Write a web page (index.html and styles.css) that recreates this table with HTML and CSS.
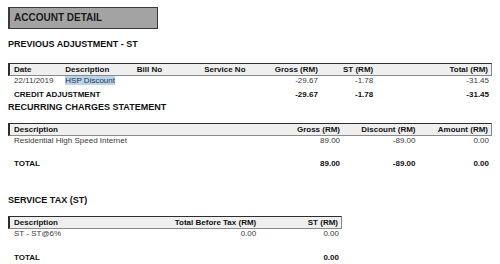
FILE: index.html
```html
<!DOCTYPE html>
<html>
<head>
<meta charset="utf-8">
<link rel="stylesheet" href="styles.css">
</head>
<body>
<div class="title-box">ACCOUNT DETAIL</div>

<h2 class="sec sec-first">PREVIOUS ADJUSTMENT - ST</h2>
<table class="grid t1">
  <colgroup>
    <col style="width:53px"><col style="width:71px"><col style="width:67px"><col style="width:50px">
    <col style="width:70px"><col style="width:55px"><col style="width:115px">
  </colgroup>
  <thead>
    <tr><th>Date</th><th>Description</th><th>Bill No</th><th>Service No</th><th class="r">Gross (RM)</th><th class="r">ST (RM)</th><th class="r">Total (RM)</th></tr>
  </thead>
  <tbody>
    <tr class="row"><td>22/11/2019</td><td><span class="hl">HSP Discount</span></td><td></td><td></td><td class="r">-29.67</td><td class="r">-1.78</td><td class="r">-31.45</td></tr>
    <tr class="sum sum-credit"><td colspan="4">CREDIT ADJUSTMENT</td><td class="r">-29.67</td><td class="r">-1.78</td><td class="r">-31.45</td></tr>
  </tbody>
</table>

<h2 class="sec sec-tight">RECURRING CHARGES STATEMENT</h2>
<table class="grid t2">
  <colgroup>
    <col style="width:258px"><col style="width:75px"><col style="width:75px"><col style="width:73px">
  </colgroup>
  <thead>
    <tr><th>Description</th><th class="r">Gross (RM)</th><th class="r">Discount (RM)</th><th class="r">Amount (RM)</th></tr>
  </thead>
  <tbody>
    <tr class="row"><td>Residential High Speed Internet</td><td class="r">89.00</td><td class="r">-89.00</td><td class="r">0.00</td></tr>
    <tr class="sum sum-total"><td>TOTAL</td><td class="r">89.00</td><td class="r">-89.00</td><td class="r">0.00</td></tr>
  </tbody>
</table>

<h2 class="sec sec-tax">SERVICE TAX (ST)</h2>
<table class="grid t3">
  <colgroup>
    <col style="width:150px"><col style="width:99px"><col style="width:82px">
  </colgroup>
  <thead>
    <tr><th>Description</th><th class="r">Total Before Tax (RM)</th><th class="r">ST (RM)</th></tr>
  </thead>
  <tbody>
    <tr class="row"><td>ST - ST@6%</td><td class="r">0.00</td><td class="r">0.00</td></tr>
    <tr class="sum sum-total2"><td>TOTAL</td><td></td><td class="r">0.00</td></tr>
  </tbody>
</table>
</body>
</html>
```

FILE: styles.css
```css
html, body {
  background: #ffffff;
}
body {
  margin: 8px;
  margin-top: 7px;
  font-family: "Liberation Sans", Arial, sans-serif;
  color: #1e1e1e;
}
.title-box {
  width: 143px;
  height: 20px;
  background: #a3a3a3;
  border: 1px solid #3a3a3a;
  border-left-width: 2px;
  padding-left: 4px;
  font-size: 10px;
  font-weight: bold;
  line-height: 20px;
  color: #1a1a1a;
}
.sec {
  margin: 0;
  font-size: 9px;
  font-weight: bold;
  line-height: 12px;
  color: #111;
}
.sec-first { margin-top: 9px; }
.sec-tight { margin-top: 1px; }
.sec-tax { margin-top: 25px; }

.grid {
  border-collapse: separate;
  border-spacing: 0;
  table-layout: fixed;
  font-size: 8px;
}
.t1 { width: 484px; margin-top: 13px; }
.t2 { width: 484px; margin-top: 10px; }
.t3 { width: 334px; margin-top: 10px; }

.grid thead th {
  background: #efefef;
  font-weight: bold;
  text-align: left;
  height: 11px;
  line-height: 11px;
  padding: 0 3px 0 4px;
  border-top: 1px solid #2e2e2e;
  border-bottom: 1px solid #8a8a8a;
  white-space: nowrap;
  color: #111;
}
.grid thead th:first-child {
  border-left: 2px solid #2e2e2e;
}
.grid thead th:last-child {
  border-right: 1px solid #8a8a8a;
}
.grid td {
  padding: 0 3px 0 4px;
  white-space: nowrap;
  line-height: 10px;
  height: 10px;
}
.grid td:first-child {
  padding-left: 6px;
}
.row td {
  color: #3a3a3a;
}
.sum td {
  font-weight: bold;
  color: #111;
}
.sum-credit td { padding-top: 4px; }
.sum-total td { padding-top: 13px; }
.sum-total2 td { padding-top: 14px; }
.r { text-align: right; }
.grid th.r { text-align: right; }
.hl {
  background: #b9d5ee;
  color: #2a3340;
}
```
